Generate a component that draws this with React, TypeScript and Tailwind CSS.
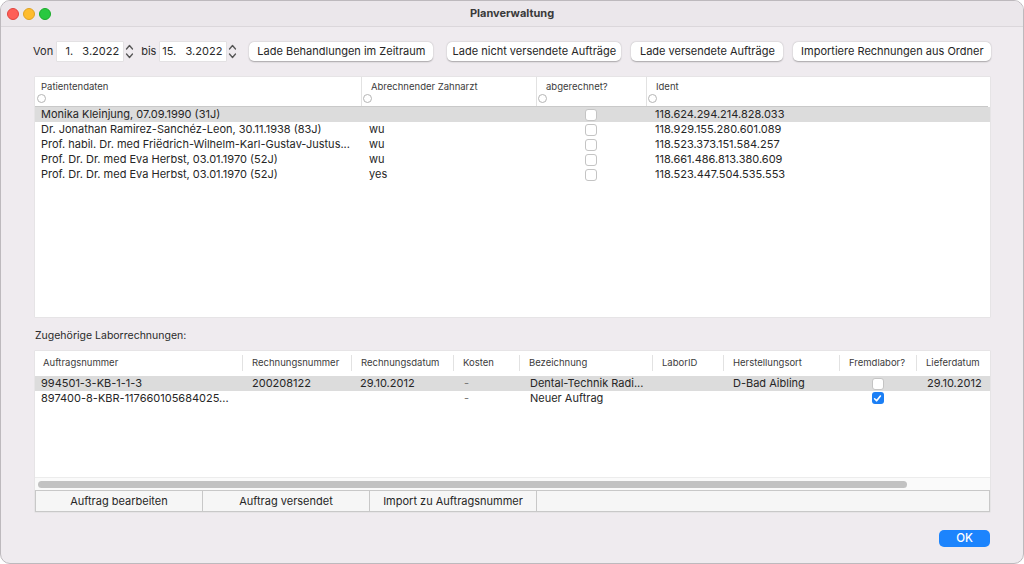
import React from "react";

const patients = [
    { name: "Monika Kleinjung, 07.09.1990 (31J)", arzt: "", ident: "118.624.294.214.828.033" },
    { name: "Dr. Jonathan Ramirez-Sanchéz-Leon, 30.11.1938 (83J)", arzt: "wu", ident: "118.929.155.280.601.089" },
    { name: "Prof. habil. Dr. med Friëdrich-Wilhelm-Karl-Gustav-Justus...", arzt: "wu", ident: "118.523.373.151.584.257" },
    { name: "Prof. Dr. Dr. med Eva Herbst, 03.01.1970 (52J)", arzt: "wu", ident: "118.661.486.813.380.609" },
    { name: "Prof. Dr. Dr. med Eva Herbst, 03.01.1970 (52J)", arzt: "yes", ident: "118.523.447.504.535.553" },
];

const laborCols = [
    { title: "Auftragsnummer", w: "w-[207px]" },
    { title: "Rechnungsnummer", w: "w-[109px]" },
    { title: "Rechnungsdatum", w: "w-[102px]" },
    { title: "Kosten", w: "w-[66px]" },
    { title: "Bezeichnung", w: "w-[133px]" },
    { title: "LaborID", w: "w-[71px]" },
    { title: "Herstellungsort", w: "w-[116px]" },
    { title: "Fremdlabor?", w: "w-[77px]" },
    { title: "Lieferdatum", w: "flex-1" },
];

function Stepper() {
    return (
        <svg width="11" height="19" viewBox="0 0 11 19" className="text-[#555]">
            <path d="M2.5 7 L5.5 3.5 L8.5 7" fill="none" stroke="currentColor" strokeWidth="1.3" strokeLinecap="round" strokeLinejoin="round" />
            <path d="M2.5 12 L5.5 15.5 L8.5 12" fill="none" stroke="currentColor" strokeWidth="1.3" strokeLinecap="round" strokeLinejoin="round" />
        </svg>
    );
}

function DateField({ value }: { value: string }) {
    return (
        <div className="flex items-center">
            <div className="w-[66px] h-[19px] bg-white flex items-center justify-end pr-[4px] text-[11px] text-[#2a2a2a] whitespace-pre shadow-[0_0_0_0.5px_#d8d8d8]">
                {value}
            </div>
            <div className="ml-[1px]"><Stepper /></div>
        </div>
    );
}

function Btn({ children, w }: { children: React.ReactNode; w: string }) {
    return (
        <div className={`${w} h-[19px] bg-white rounded-[5px] flex items-center justify-center text-[11px] text-[#262626] shadow-[0_0.5px_1.5px_rgba(0,0,0,0.3)] whitespace-nowrap`}>
            {children}
        </div>
    );
}

function Circle() {
    return <div className="w-[9px] h-[9px] rounded-full border border-[#b5b5b5] bg-white" />;
}

function Check({ checked }: { checked?: boolean }) {
    if (checked) {
        return (
            <div className="w-[12px] h-[12px] rounded-[3px] bg-[#1b7ff5] flex items-center justify-center">
                <svg width="9" height="9" viewBox="0 0 9 9">
                    <path d="M1.6 4.8 L3.6 6.8 L7.4 2" fill="none" stroke="white" strokeWidth="1.6" strokeLinecap="round" strokeLinejoin="round" />
                </svg>
            </div>
        );
    }
    return <div className="w-[12px] h-[12px] rounded-[3px] bg-white border border-[#c4c4c4]" />;
}

function PatientHeader({ title, w, first }: { title: string; w: string; first?: boolean }) {
    return (
        <div className={`${w} h-full flex flex-col pt-[4px] ${first ? "pl-[2px]" : "border-l border-[#e2e2e2] pl-[1px]"}`}>
            <div className={`text-[9.5px] text-[#3c3c3c] leading-[12px] ${first ? "pl-[4px]" : "pl-[8px]"}`}>{title}</div>
            <div className="mt-[1px]"><Circle /></div>
        </div>
    );
}

export default function App() {
    return (
        <div className="w-[1024px] h-[564px] flex flex-col bg-[#efebef] overflow-hidden border border-[#bdb9bd] rounded-[10px] font-['Inter','Liberation_Sans',sans-serif]">
            <div className="h-[26px] shrink-0 grid grid-cols-[1fr_auto_1fr] items-center border-b border-[#dbd7db] bg-[#ebe7eb]">
                <div className="flex gap-[4px] pl-[6px]">
                    <div className="w-[12px] h-[12px] rounded-full bg-[#fe5f57] border border-[#e0443e]" />
                    <div className="w-[12px] h-[12px] rounded-full bg-[#febc2e] border border-[#dea123]" />
                    <div className="w-[12px] h-[12px] rounded-full bg-[#28c840] border border-[#1aab29]" />
                </div>
                <div className="text-[11px] font-bold text-[#3a3a3a]">Planverwaltung</div>
                <div />
            </div>

            <div className="flex flex-col pl-[32px] pr-[33px] pt-[14px]">
                <div className="flex items-center h-[20px]">
                    <span className="text-[11px] text-[#2a2a2a] mr-[4px]">Von</span>
                    <DateField value={"1.   3.2022"} />
                    <span className="text-[11px] text-[#2a2a2a] ml-[6px] mr-[4px]">bis</span>
                    <DateField value={"15.   3.2022"} />
                    <div className="ml-[11px] flex">
                        <Btn w="w-[184px]">Lade Behandlungen im Zeitraum</Btn>
                        <div className="ml-[14px]"><Btn w="w-[174px]">Lade nicht versendete Aufträge</Btn></div>
                        <div className="ml-[10px]"><Btn w="w-[152px]">Lade versendete Aufträge</Btn></div>
                        <div className="ml-[10px]"><Btn w="w-[198px]">Importiere Rechnungen aus Ordner</Btn></div>
                    </div>
                </div>

                <div className="mt-[16px] ml-[2px] h-[240px] bg-white flex flex-col shadow-[0_0_0_0.5px_#dedede]">
                    <div className="h-[30px] flex border-b border-[#c9c9c9] mr-[2px]">
                        <PatientHeader title="Patientendaten" w="w-[326px]" first />
                        <PatientHeader title="Abrechnender Zahnarzt" w="w-[175px]" />
                        <PatientHeader title="abgerechnet?" w="w-[110px]" />
                        <PatientHeader title="Ident" w="flex-1" />
                    </div>
                    {patients.map((p, i) => (
                        <div key={i} className={`h-[15px] flex items-center text-[11px] text-[#262626] ${i === 0 ? "bg-[#dcdcdc]" : ""}`}>
                            <div className="w-[326px] pl-[6px] whitespace-nowrap">{p.name}</div>
                            <div className="w-[175px] pl-[8px]">{p.arzt}</div>
                            <div className="w-[110px] flex justify-center"><Check /></div>
                            <div className="flex-1 pl-[9px]">{p.ident}</div>
                        </div>
                    ))}
                </div>

                <div className="mt-[12px] ml-[2px] text-[10.5px] text-[#2a2a2a] leading-[14px]">Zugehörige Laborrechnungen:</div>

                <div className="mt-[8px] ml-[2px] flex flex-col bg-white shadow-[0_0_0_0.5px_#dedede]">
                    <div className="h-[24px] flex items-center">
                        {laborCols.map((c, i) => (
                            <div key={c.title} className={`${c.w} h-[16px] flex items-center text-[9.5px] text-[#3c3c3c] ${i === 0 ? "pl-[8px]" : "pl-[9px] border-l border-[#e2e2e2]"}`}>
                                {c.title}
                            </div>
                        ))}
                    </div>
                    <div className="h-[102px] pt-[1px] flex flex-col">
                        <div className="h-[15px] flex items-center bg-[#dcdcdc] text-[11px] text-[#262626]">
                            <div className="w-[207px] pl-[6px]">994501-3-KB-1-1-3</div>
                            <div className="w-[109px] pl-[10px]">200208122</div>
                            <div className="w-[102px] pl-[9px]">29.10.2012</div>
                            <div className="w-[66px] pl-[11px] text-[#777]">-</div>
                            <div className="w-[133px] pl-[11px]">Dental-Technik Radi...</div>
                            <div className="w-[71px]" />
                            <div className="w-[116px] pl-[10px]">D-Bad Aibling</div>
                            <div className="w-[77px] flex justify-center"><Check /></div>
                            <div className="flex-1 pl-[11px]">29.10.2012</div>
                        </div>
                        <div className="h-[14px] flex items-center text-[11px] text-[#262626]">
                            <div className="w-[207px] pl-[6px] whitespace-nowrap">897400-8-KBR-117660105684025...</div>
                            <div className="w-[109px]" />
                            <div className="w-[102px]" />
                            <div className="w-[66px] pl-[11px] text-[#777]">-</div>
                            <div className="w-[133px] pl-[11px]">Neuer Auftrag</div>
                            <div className="w-[71px]" />
                            <div className="w-[116px]" />
                            <div className="w-[77px] flex justify-center"><Check checked /></div>
                            <div className="flex-1" />
                        </div>
                    </div>
                    <div className="h-[13px] bg-[#fafafa] border-t border-[#ececec] flex items-center pl-[3px]">
                        <div className="w-[869px] h-[7px] rounded-full bg-[#c2c2c2]" />
                    </div>
                    <div className="h-[22px] flex bg-[#f6f6f6] border border-[#c8c8c8] text-[11px] text-[#262626]">
                        <div className="w-[167px] flex items-center justify-center border-r border-[#c8c8c8]">Auftrag bearbeiten</div>
                        <div className="w-[167px] flex items-center justify-center border-r border-[#c8c8c8]">Auftrag versendet</div>
                        <div className="w-[167px] flex items-center justify-center border-r border-[#c8c8c8]">Import zu Auftragsnummer</div>
                        <div className="flex-1" />
                    </div>
                </div>

                <div className="mt-[18px] self-end w-[51px] h-[17px] rounded-[5px] bg-[#1c84fd] flex items-center justify-center text-[11.5px] font-medium text-white">
                    OK
                </div>
            </div>
        </div>
    );
}
